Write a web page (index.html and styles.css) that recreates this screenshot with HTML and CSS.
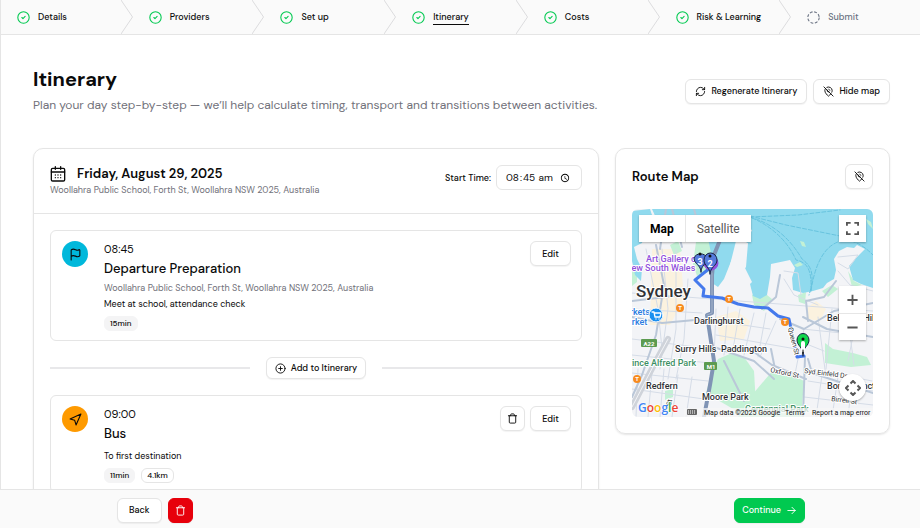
FILE: index.html
```html
<!DOCTYPE html>
<html lang="en">
<head>
<meta charset="utf-8">
<meta name="viewport" content="width=device-width, initial-scale=1">
<title>Itinerary</title>
<link rel="stylesheet" href="styles.css">
</head>
<body>
<svg class="defs" aria-hidden="true">
  <symbol id="check" viewBox="0 0 24 24"><circle cx="12" cy="12" r="10.5"/><path d="m9 12 2 2 4-4"/></symbol>
  <symbol id="dashed" viewBox="0 0 24 24"><circle cx="12" cy="12" r="10.5" stroke-linecap="butt" stroke-dasharray="5.2 3.05"/></symbol>
  <symbol id="chevron" viewBox="0 0 12 34" preserveAspectRatio="none"><path d="M0 0 11.500 17 0 34"/></symbol>
  <symbol id="refresh" viewBox="0 0 24 24"><path d="M3 12a9 9 0 0 1 9-9 9.750 9.750 0 0 1 6.740 2.740L21 8M21 3v5h-5M21 12a9 9 0 0 1-9 9 9.750 9.750 0 0 1-6.740-2.740L3 16M8 16H3v5"/></symbol>
  <symbol id="pin-off" viewBox="0 0 24 24"><path d="M12.750 7.090a3 3 0 0 1 2.160 2.160M17.072 17.072c-1.634 2.170-3.527 3.912-4.471 4.727a1 1 0 0 1-1.202 0C9.539 20.193 4 14.993 4 10a8 8 0 0 1 1.432-4.568M2 2l20 20M8.475 2.818A8 8 0 0 1 20 10c0 1.183-.310 2.377-.810 3.533M9.130 9.130a3 3 0 0 0 3.740 3.740"/></symbol>
  <symbol id="calendar" viewBox="0 0 24 24"><path d="M8 1v4M16 1v4M2 9h20M8 13.500h.01M12 13.500h.01M16 13.500h.01M8 17.500h.01M12 17.500h.01M16 17.500h.01"/><rect x="2" y="3.500" width="20" height="19" rx="2"/></symbol>
  <symbol id="flag" viewBox="0 0 24 24"><path d="M4 22V4a1 1 0 0 1 .4-.8A6 6 0 0 1 8 2c3 0 5 2 7.333 2q2 0 3.067-.8A1 1 0 0 1 20 4v10a1 1 0 0 1-.4.8A6 6 0 0 1 16 16c-3 0-5-2-8-2a6 6 0 0 0-4 1.528"/></symbol>
  <symbol id="plane" viewBox="0 0 24 24"><path d="M2 11 22 2l-9 20-2.500-8.500z"/></symbol>
  <symbol id="plus-circle" viewBox="0 0 24 24"><circle cx="12" cy="12" r="10"/><path d="M8 12h8M12 8v8"/></symbol>
  <symbol id="trash" viewBox="0 0 24 24"><path d="M19 6v14a2 2 0 0 1-2 2H7a2 2 0 0 1-2-2V6M3 6h18M8 6V4a2 2 0 0 1 2-2h4a2 2 0 0 1 2 2v2"/></symbol>
  <symbol id="arrow" viewBox="0 0 24 24"><path d="M4 12h16M13 5l7 7-7 7"/></symbol>
</svg>

<div class="app">
  <nav class="steps" aria-label="Steps">
    <a class="step" href="#"><svg class="icon done"><use href="#check"/></svg><span>Details</span><svg class="sep"><use href="#chevron"/></svg></a>
    <a class="step" href="#"><svg class="icon done"><use href="#check"/></svg><span>Providers</span><svg class="sep"><use href="#chevron"/></svg></a>
    <a class="step" href="#"><svg class="icon done"><use href="#check"/></svg><span>Set up</span><svg class="sep"><use href="#chevron"/></svg></a>
    <a class="step" href="#" aria-current="step"><svg class="icon done"><use href="#check"/></svg><span class="current">Itinerary</span><svg class="sep"><use href="#chevron"/></svg></a>
    <a class="step" href="#"><svg class="icon done"><use href="#check"/></svg><span>Costs</span><svg class="sep"><use href="#chevron"/></svg></a>
    <a class="step" href="#"><svg class="icon done"><use href="#check"/></svg><span>Risk &amp; Learning</span><svg class="sep"><use href="#chevron"/></svg></a>
    <a class="step pending" href="#"><svg class="icon"><use href="#dashed"/></svg><span>Submit</span></a>
  </nav>

  <main class="main">
    <header class="page-head">
      <div>
        <h1>Itinerary</h1>
        <p class="lead">Plan your day step-by-step — we’ll help calculate timing, transport and transitions between activities.</p>
      </div>
      <div class="actions">
        <button class="btn" type="button"><svg class="ico"><use href="#refresh"/></svg>Regenerate Itinerary</button>
        <button class="btn" type="button"><svg class="ico"><use href="#pin-off"/></svg>Hide map</button>
      </div>
    </header>

    <div class="columns">
      <section class="card">
        <div class="day-head">
          <div>
            <h2><svg class="cal"><use href="#calendar"/></svg>Friday, August 29, 2025</h2>
            <p class="muted">Woollahra Public School, Forth St, Woollahra NSW 2025, Australia</p>
          </div>
          <div class="start">
            <label for="start">Start Time:</label>
            <input id="start" type="time" value="08:45">
          </div>
        </div>
        <div class="day-body">
          <article class="stop">
            <span class="dot cyan"><svg class="ico"><use href="#flag"/></svg></span>
            <div class="stop-text">
              <time>08:45</time>
              <h3>Departure Preparation</h3>
              <p class="muted">Woollahra Public School, Forth St, Woollahra NSW 2025, Australia</p>
              <p class="note">Meet at school, attendance check</p>
              <div class="badges"><span class="badge">15min</span></div>
            </div>
            <div class="stop-actions"><button class="btn" type="button">Edit</button></div>
          </article>
          <div class="add">
            <button class="btn small" type="button"><svg class="ico"><use href="#plus-circle"/></svg>Add to Itinerary</button>
          </div>
          <article class="stop">
            <span class="dot orange"><svg class="ico"><use href="#plane"/></svg></span>
            <div class="stop-text">
              <time>09:00</time>
              <h3>Bus</h3>
              <p class="note spaced">To first destination</p>
              <div class="badges"><span class="badge">11min</span><span class="badge outline">4.1km</span></div>
            </div>
            <div class="stop-actions">
              <button class="btn square" type="button" aria-label="Delete"><svg class="ico"><use href="#trash"/></svg></button>
              <button class="btn" type="button">Edit</button>
            </div>
          </article>
        </div>
      </section>

      <section class="card route">
        <div class="route-head">
          <h2>Route Map</h2>
          <button class="btn toggle" type="button" aria-label="Hide map"><svg class="ico"><use href="#pin-off"/></svg></button>
        </div>
        <div class="map">
          <svg class="canvas" viewBox="0 0 241 208" preserveAspectRatio="xMidYMid slice">
            <rect width="241" height="208" fill="#f3f4f7"/>
            <path fill="#fbf2df" d="M20 40h28l4 50-14 26H18zM176 98l8-6 10 8-6 12-12-2zM84 108l20-6 14 10-6 18-24 2z"/>
            <g fill="#c3f1d5">
              <path d="M64 33h20l-4 14-3 16-12 4-4-12z"/>
              <path d="M120 86l10-4 10 8-8 12-10-6zM166 86l8-3-1 12-6-2zM190 82l10-6 6 4-10 8zM216 62l6 10 8 4-10 2z"/>
              <path d="M86 150l14-6 12 4 10 14 2 34-16 8-24-14-10-6 6-22z"/>
              <path d="M142 160l14 4 16 8-2 26 2 10h-66l14-22z"/>
              <path d="M193 134l8 6 20 4 14 4 4 8-20 2-26-4z"/>
              <path d="M33 182l8-2v8l-8 3zM38 36l8-4 4 10-8 4zM0 60l5 3v10l-5 4z"/>
            </g>
            <g fill="#90daee">
              <path d="M0 2 18 0l2 6-6 14-4 14-8 4 3 12 5 10-1 12-6-6-3-14zM20 0h51l6 8 14 8 2 20-8 2-6-6H52l-4-8-8 8h-8l-4-14z"/>
              <path d="M70 0h171v79l-12-4-8-4-4-14 8-9 8-8-8-4-3 3-7-1-8 4-5 8 2 11-2 9-7 4-4 5-10 3-10 2-10-3-1-12 3-10-5-8-19 4-1 13-3 18-7 4-7-3-3-12 2-2-9-18 2-18 7-16-9-4-4 15-7 18-8 20-6 8-6-4 1-20z"/>
            </g>
            <path fill="#f3f4f7" d="M104 32l12 2-2 24-12 16-8 2 2-12z"/>
            <path fill="#c3f1d5" d="M168 32l4 1 2 5-4-1zM162 56l6-3 3 3-6 2zM234 10l5 3 2 7-5-5z"/>
            <g fill="none" stroke="#68c3de" stroke-width="1" stroke-dasharray="4 2">
              <path d="M118 7l36 9 54 11M118 8l48-2 42-5M120 9c24 10 38 28 44 42 10 2 16 8 15 30M118 8c20 6 38 18 52 42 8 6 14 14 7 36M179 82c4-28 14-46 30-50 10-2 20 2 32 14"/>
            </g>
            <g fill="none" stroke="#d5dce7" stroke-width="1">
              <path d="M0 84l241 18M0 100l70 4M14 40l12 60 4 40M30 40l6 60-8 60M44 40v80l-8 50M56 70l-4 60-8 40M0 130l80 10M0 146l78 8M0 164l76 8M0 180l72 10M6 160l-2 48M20 164l-4 44M32 160l-4 48M46 166l-6 42M60 168l-6 40"/>
              <path d="M84 100l-2 50M96 98l-4 48M108 100l-8 46M122 104l-10 42M134 104l-8 44M84 112l54 8M84 126l80 14M144 112l-16 36M172 120l-10 50M186 108l8 60M200 100l-6 60M214 96l8 60M228 92l-12 60M170 120l60 6M172 134l20 8M180 160l60 12M176 172l65 10M172 188l69 8M190 166l-6 42M206 168l-6 40M220 172l-4 36M152 62l14 2 3 22M152 70l10 16 24 10M206 48l20-2-10 14-10-6M206 62l12 14 23 6"/>
            </g>
            <g fill="none" stroke="#bac7d8" stroke-width="2">
              <path d="M24 36l8 40-8 50-14 40-10 22M0 108l30 6 44-4M82 138l40 14 20 18M118 140l22 16 34 14M148 110l24 10 30-18 39-8M143 160l-4-20M0 92l50-6M148 66l-4 22-14 12M204 72l-12 16-18 4 2 20M176 150l4 14 61 20M241 128l-46-8-24-12M92 152l20 40M173 148l-2 60"/>
              <path d="M40 0l10 38M62 0l8 30M34 0l-6 40"/>
            </g>
            <path d="M36 130l-12 22-24 46" fill="none" stroke="#cfd3da" stroke-width="6"/>
            <path d="M36 130l-12 22-24 46" fill="none" stroke="#f3f4f7" stroke-width="1"/>
            <path d="M90 26l-8 20-2 20v38l-5 2 7 46-4 24-6 32" fill="none" stroke="#8094b5" stroke-width="4"/>
            <path d="M80 64v40l-5 2" fill="none" stroke="#a3b3ca" stroke-width="1"/>
            <path d="M78 59 63 71l9 9-1 7 19 2 16 6 16 3 14 1 10 8 11 3 8 38 7-1" fill="none" stroke="#4479ec" stroke-width="3" stroke-linejoin="round"/>
            <g class="tram">
              <circle cx="97" cy="90" r="4"/><circle cx="48" cy="99" r="4"/><circle cx="153" cy="113" r="4"/><circle cx="5" cy="170" r="4"/>
            </g>
            <g class="tram-t"><text x="97" y="92">T</text><text x="48" y="101">T</text><text x="153" y="115">T</text><text x="5" y="172">T</text></g>
            <rect x="9" y="130" width="16" height="8" rx="1" fill="#5c9b50"/><text class="shield" x="17" y="137">A22</text>
            <rect x="72" y="153" width="13" height="8" rx="1" fill="#5c9b50"/><text class="shield" x="79" y="160">M1</text>
            <g class="lbl purple"><text x="14" y="53">Art Gallery of</text><text x="-7" y="62">New South Wales</text></g>
            <g class="lbl blue"><text x="-15" y="106">Markets</text><text x="-13" y="116">Market</text></g>
            <g class="lbl">
              <text x="62" y="115">Darlinghurst</text><text x="43" y="143">Surry Hills</text><text x="89" y="143">Paddington</text>
              <text x="14" y="180">Redfern</text><text x="70" y="191">Moore Park</text>
              <text x="195" y="112">Bellevue Hill</text><text x="195" y="180">Bondi Junction</text>
            </g>
            <g class="lbl green"><text x="-9" y="157">Prince Alfred Park</text><text x="113" y="203">Centennial Park</text></g>
            <g class="street">
              <text transform="translate(138 163) rotate(12)">Oxford St</text>
              <text transform="translate(172 164) rotate(7)">Syd Einfeld Dr</text>
              <text transform="translate(199 192) rotate(7)">Birrell St</text>
              <text transform="translate(156 119) rotate(76)">Queen St</text>
              <text transform="translate(39 197) rotate(-80)">St</text>
            </g>
            <text class="city" x="4" y="88">Sydney</text>
            <circle cx="24" cy="106" r="7" fill="#1a8ff0" stroke="#fff" stroke-width="1"/>
            <path d="M20 103h2l1 5h5l1-4h-6M24 110h.01M27 110h.01" fill="none" stroke="#fff" stroke-width="1.300" stroke-linecap="round"/>
            <circle cx="79" cy="54" r="6" fill="#fff" stroke="#9150dc" stroke-width="3"/>
            <g class="pin">
              <path fill="#557bdc" d="M69 63c0-7-7-8-7-14a7 6.500 0 0 1 13 0c0 6-6 7-6 14z"/><circle cx="68" cy="45" r="1.500"/>
              <path fill="#557bdc" d="M78 65c0-7-6-8-6-14a6 6.500 0 0 1 13 0c0 6-7 7-7 14z"/><circle cx="78" cy="47" r="1.500"/>
              <path fill="#10d64c" d="M171 145c0-7-6-8-6-14a6 6.500 0 0 1 12 0c0 6-6 7-6 14z"/><circle cx="171" cy="130" r="1.500"/>
            </g>
            <path d="M171 134v7" stroke="#fff" stroke-width="4"/><path d="M171 141v6" stroke="#111" stroke-width="1"/>
            <g class="pin-t"><text x="68" y="56">3</text><text x="78" y="58">2</text></g>
            <rect x="52" y="199" width="189" height="9" fill="#f7f7f7" fill-opacity=".75"/>
            <rect x="55" y="200" width="10" height="6" rx="1" fill="#666"/><path d="M56 202h8M56 204h8" stroke="#fff" stroke-width="1" stroke-linecap="butt" stroke-dasharray="1 1"/>
            <text class="google" x="6" y="203"><tspan fill="#4285f4">G</tspan><tspan fill="#ea4335">o</tspan><tspan fill="#fbbc05">o</tspan><tspan fill="#4285f4">g</tspan><tspan fill="#34a853">l</tspan><tspan fill="#ea4335">e</tspan></text>
            <g class="legal"><text x="72" y="206">Map data ©2025 Google</text><text x="153" y="206">Terms</text><text x="180" y="206">Report a map error</text></g>
          </svg>
          <div class="map-type"><button type="button" class="active">Map</button><button type="button">Satellite</button></div>
          <button type="button" class="ctl full" aria-label="Full screen"><svg viewBox="0 0 14 14"><path d="M1 4V1h4M9 1h4v3M13 10v3H9M5 13H1v-3"/></svg></button>
          <div class="zoom">
            <button type="button" aria-label="Zoom in"><svg viewBox="0 0 14 14"><path d="M7 2v11M1.500 7.500h11"/></svg></button>
            <button type="button" aria-label="Zoom out"><svg viewBox="0 0 14 14"><path d="M1.500 7h11"/></svg></button>
          </div>
          <button type="button" class="ctl pan" aria-label="Map camera controls"><svg viewBox="0 0 16 16"><path d="M5.500 3.500 8 1l2.500 2.500M5.500 12.500 8 15l2.500-2.500M3.500 5.500 1 8l2.500 2.500M12.500 5.500 15 8l-2.500 2.500"/></svg></button>
        </div>
      </section>
    </div>
  </main>

  <footer class="footer">
    <div class="footer-left">
      <button class="btn back" type="button">Back</button>
      <button class="btn square danger" type="button" aria-label="Delete"><svg class="ico"><use href="#trash"/></svg></button>
    </div>
    <button class="btn primary" type="button">Continue<svg class="ico"><use href="#arrow"/></svg></button>
  </footer>
</div>
</body>
</html>
```
FILE: styles.css
```css
* { box-sizing: border-box; margin: 0; }

:root {
  --line: #e5e5e5;
  --ink: #0a0a0a;
  --muted: #71717a;
}

body {
  font-family: "DM Sans", Inter, sans-serif;
  font-size: 9px;
  line-height: 14px;
  color: var(--ink);
  background: #fff;
}

button, input { font: inherit; color: inherit; }
a { color: inherit; text-decoration: none; }
svg { fill: none; stroke: currentColor; stroke-width: 2; stroke-linecap: round; stroke-linejoin: round; flex: none; }
.defs { display: none; }

.app { display: flex; flex-direction: column; height: 100vh; overflow: hidden; }

.steps {
  display: grid;
  grid-template-columns: repeat(6, 132fr) 129fr;
  flex: none;
  height: 35px;
  background: #fafafa;
  border-bottom: 1px solid var(--line);
  border-left: 1px solid var(--line);
}
.step { display: flex; align-items: center; gap: 8px; padding-left: 16px; font-weight: 500; white-space: nowrap; }
.icon { width: 13px; height: 13px; }
.done { color: #00c950; }
.pending { color: #6a7282; }
.sep { width: 12px; height: 34px; margin-left: auto; color: #dcdcde; stroke-width: 1; }
.current { border-bottom: 1px solid var(--ink); }

.main {
  flex: 1;
  min-height: 0;
  overflow: hidden;
  padding: 30px 30px 0 32px;
  border-left: 1px solid var(--line);
}
.page-head { display: flex; justify-content: space-between; align-items: center; margin-bottom: 31px; }
h1 { font-size: 20px; line-height: 28px; font-weight: 700; }
.lead { font-size: 12px; line-height: 24px; color: var(--muted); }
.actions { display: flex; gap: 6px; }

.btn {
  display: inline-flex;
  align-items: center;
  justify-content: center;
  gap: 5px;
  height: 25px;
  padding: 0 9px;
  font-weight: 500;
  white-space: nowrap;
  background: #fff;
  border: 1px solid var(--line);
  border-radius: 6px;
  box-shadow: 0 1px 1px rgba(0, 0, 0, .05);
}
.ico { width: 11px; height: 11px; }
.stop-actions .btn, .back { padding: 0 11px; }
.stop-actions .btn.square, .btn.square { width: 25px; padding: 0; }
.btn.small { height: 22px; padding: 0 8px; }
.btn.toggle { width: 28px; padding: 0; }

.columns { display: grid; grid-template-columns: minmax(0, 1fr) 275px; gap: 16px; align-items: start; }
.card { border: 1px solid var(--line); border-radius: 10px; box-shadow: 0 1px 2px rgba(0, 0, 0, .1); }
h2 { display: flex; align-items: center; gap: 11px; font-size: 13px; line-height: 18px; font-weight: 600; }
.cal { width: 16px; height: 16px; }
.muted { color: var(--muted); }

.day-head { display: flex; justify-content: space-between; padding: 16px; border-bottom: 1px solid var(--line); }
.start { display: flex; align-items: center; align-self: flex-start; height: 25px; gap: 5px; font-weight: 500; }
.start input {
  width: 86px;
  height: 25px;
  padding: 0 8px;
  font-size: 10px;
  font-weight: 400;
  background: #fff;
  border: 1px solid var(--line);
  border-radius: 6px;
}
.start input::-webkit-datetime-edit { flex: none; padding: 0; }
.start input::-webkit-datetime-edit-ampm-field { text-transform: lowercase; }
.start input::-webkit-calendar-picker-indicator { width: 10px; height: 10px; padding: 0; margin: 0 0 0 5px; }

.day-body { padding: 16px; }
.stop { display: flex; align-items: flex-start; padding: 10px 10px 9px 11px; border: 1px solid var(--line); border-radius: 6px; }
.dot { display: grid; place-items: center; width: 26px; height: 26px; border-radius: 50%; }
.dot .ico { width: 13px; height: 13px; }
.cyan { background: #00b8db; }
.orange { background: #fe9a00; }
.stop-text { flex: 1; margin-left: 16px; }
.stop-text time { display: block; font-size: 11px; line-height: 16px; }
h3 { font-size: 13px; line-height: 24px; font-weight: 500; }
.note { line-height: 18px; }
.spaced { margin-top: 1px; }
.badges { display: flex; gap: 6px; margin-top: 3px; }
.badge { padding: 0 5px; font-size: 8px; line-height: 13px; font-weight: 500; background: #f4f4f5; border-radius: 6px; border: 1px solid #f4f4f5; }
.outline { background: #fff; border-color: var(--line); }
.stop-actions { display: flex; gap: 5px; }
.add { display: flex; align-items: center; gap: 16px; margin: 16px 0; }
.add::before, .add::after { content: ""; flex: 1; height: 2px; background: #e8e8ea; }

.route { padding: 15px 16px 16px; }
.route-head { display: flex; justify-content: space-between; align-items: center; margin-bottom: 20px; }

.map { position: relative; height: 208px; overflow: hidden; border-radius: 6px; font-family: Roboto, sans-serif; }
.canvas { display: block; width: 100%; height: 100%; stroke: none; }
.canvas text { fill: #303236; }
.canvas .lbl text { font-size: 9px; font-weight: 500; stroke: #fff; stroke-width: 2px; paint-order: stroke; }
.canvas .purple text { fill: #9150dc; }
.canvas .blue text { fill: #2a7de1; }
.canvas .green text { fill: #3c8f63; }
.canvas .street text { font-size: 7px; stroke: #fff; stroke-width: 2px; paint-order: stroke; }
.canvas .city { font-size: 17px; font-weight: 500; stroke: #fff; stroke-width: 2px; paint-order: stroke; }
.canvas .shield { font-size: 6px; font-weight: 700; fill: #fff; text-anchor: middle; }
.tram { fill: #f78b1f; }
.canvas .tram-t text { font-size: 6px; font-weight: 700; fill: #fff; text-anchor: middle; }
.pin { stroke: #182344; stroke-width: 1; }
.pin circle { fill: #111; stroke: none; }
.canvas .pin-t text { font-size: 9px; font-weight: 700; fill: #fff; text-anchor: middle; }
.canvas .google { font-family: "Open Sans", sans-serif; font-size: 12px; font-weight: 600; stroke: #fff; stroke-width: 1px; paint-order: stroke; }
.canvas .legal text { font-size: 7px; fill: #111; }

.map button { display: grid; place-items: center; padding: 0; border: 0; background: #fff; color: #565656; }
.map button svg { width: 13px; height: 13px; stroke-linecap: butt; stroke-linejoin: miter; }
.map-type { position: absolute; top: 6px; left: 7px; display: flex; height: 27px; box-shadow: 0 1px 2px rgba(0, 0, 0, .3); }
.map .map-type button { padding: 0 11px; font-size: 12px; }
.map .map-type .active { font-weight: 700; color: #000; border-right: 1px solid #e6e6e6; }
.ctl, .zoom { position: absolute; right: 7px; width: 27px; box-shadow: 0 1px 2px rgba(0, 0, 0, .3); }
.ctl { height: 27px; }
.full { top: 6px; }
.zoom { top: 77px; }
.zoom button { width: 27px; height: 27px; }
.zoom button + button { border-top: 1px solid #e6e6e6; }
.pan { bottom: 16px; }
.map .pan { border-radius: 50%; }
.map .pan svg { width: 16px; height: 16px; }

.footer {
  display: flex;
  justify-content: space-between;
  align-items: center;
  flex: none;
  height: 39px;
  padding: 2px 115px 0 117px;
  background: #fafafa;
  border-top: 1px solid var(--line);
}
.footer-left { display: flex; gap: 6px; }
.btn.danger { background: #e7000b; border-color: #e7000b; color: #fff; }
.btn.primary { padding: 0 7px; background: #00c950; border-color: #00c950; color: #fff; }
```
